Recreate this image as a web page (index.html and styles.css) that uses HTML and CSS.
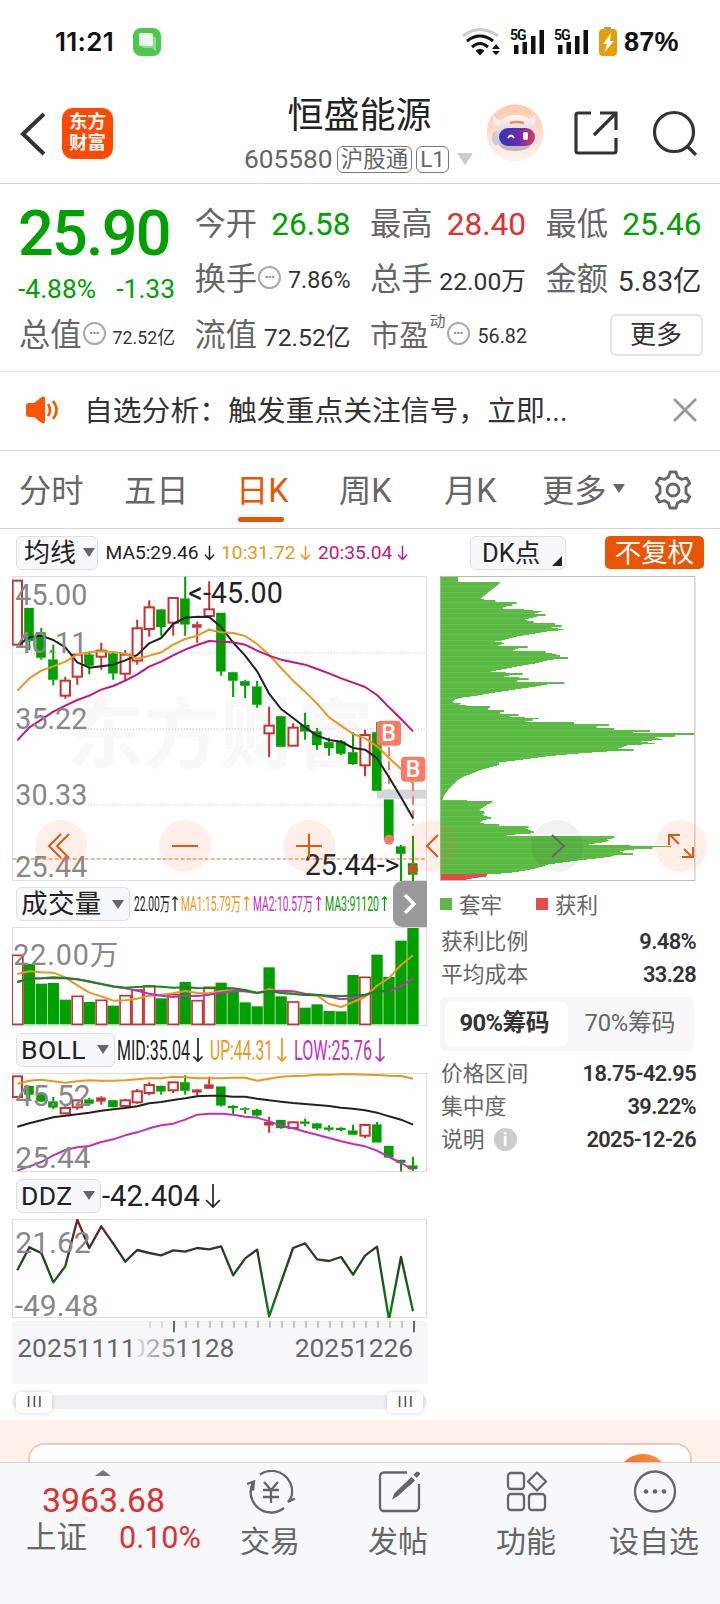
FILE: index.html
```html
<!DOCTYPE html>
<html lang="zh-CN">
<head>
    <meta charset="UTF-8">
    <meta name="viewport" content="width=device-width, initial-scale=1.0">
    <title>恒盛能源 605580</title>
    <link rel="stylesheet" href="styles.css">
</head>
<body>

<div class="status-bar">
    <span class="clock">11:21</span>
    <svg class="msg-icon" width="28" height="28" viewBox="0 0 28 28">
        <rect width="28" height="28" rx="8" fill="#4cc94a"/>
        <path d="M9 9h12a2 2 0 0 1 2 2v12l-4-3h-8a2 2 0 0 1-2-2z" fill="#8fe08c"/>
        <rect x="6" y="5" width="14" height="13" rx="2" fill="#eafbe9"/>
    </svg>
    <svg class="signals" width="160" height="32" viewBox="0 0 160 32">
        <g fill="none" stroke-width="3">
            <path d="M1 9Q18-4 36 9" stroke="#ccc"/>
            <path d="M5 14Q18 4 31 14" stroke="#111"/>
            <path d="M10 20Q18 13 26 20" stroke="#111"/>
        </g>
        <path d="M13.500 23.500Q18 20 22.500 23.500L18 28.500zM34 17l4 5h-8zM34 28l4-4h-8z" fill="#111"/>
        <g fill="#111">
            <path d="M52 18h4.500v9H52zM60.500 15H65v12h-4.500zM69 9h4.500v18H69zM77.500 3H82v24h-4.500z"/>
            <path d="M96 18h4.500v9H96zM104.500 15h4.500v12h-4.500zM113 9h4.500v18H113zM121.500 3h4.500v24h-4.500z"/>
            <text class="net" x="48" y="13">5G</text>
            <text class="net" x="92" y="13">5G</text>
        </g>
        <rect x="142" y="0" width="7" height="4" rx="1" fill="#999"/>
        <rect x="137" y="2" width="18" height="27" rx="4" fill="#e3a008"/>
        <path d="M149 6l-8 11h4l-3 9 10-12h-4z" fill="#fff"/>
    </svg>
    <span class="battery">87%</span>
</div>

<header class="header">
    <svg class="back" width="26" height="44" viewBox="0 0 26 44"><path d="M24 2L3 22l21 20" fill="none" stroke="#333" stroke-width="4"/></svg>
    <div class="logo">东方<br>财富</div>
    <div class="stock">
        <h1>恒盛能源</h1>
        <div class="code"><span>605580</span><i class="tag">沪股通</i><i class="tag">L1</i><b class="caret"></b></div>
    </div>
    <svg class="robot" width="58" height="58" viewBox="0 0 58 58">
        <defs>
            <linearGradient id="halo" x1="0" y1="0" x2="0" y2="1"><stop offset="0" stop-color="#ffc9ae"/><stop offset="1" stop-color="#fff3ee"/></linearGradient>
            <linearGradient id="visor"><stop offset="0" stop-color="#3232b8"/><stop offset=".55" stop-color="#6a2ca8"/><stop offset="1" stop-color="#d8395c"/></linearGradient>
            <linearGradient id="shell" x1="0" y1="0" x2="0" y2="1"><stop offset="0" stop-color="#fbf8f7"/><stop offset="1" stop-color="#b9b4bd"/></linearGradient>
        </defs>
        <circle cx="29" cy="29" r="28.500" fill="url(#halo)"/>
        <path d="M12 22q-7-3-4-10 3 4 9 5zM44 22q9-3 4-11-2 4-9 5z" fill="#f4efee"/>
        <ellipse cx="10" cy="34" rx="4" ry="7" fill="#cfcad2"/><ellipse cx="49" cy="34" rx="4" ry="7" fill="#e2dde2"/>
        <path d="M11 32Q11 11 30 11t18 21q0 15-19 15T11 32z" fill="url(#shell)"/>
        <rect x="13" y="24" width="36" height="18" rx="9" fill="url(#visor)"/>
        <path d="M22 34q3-5 6 0" fill="none" stroke="#fff" stroke-width="1.800"/><rect x="37" y="28" width="5" height="8" rx="2" fill="#fff"/>
        <path d="M24 19q7-2 14 0" stroke="#e8905a" stroke-width="2.500" fill="none"/>
    </svg>
    <svg class="share" width="46" height="46" viewBox="0 0 46 46"><g fill="none" stroke="#333" stroke-width="3.200"><path d="M18 3H5a2 2 0 0 0-2 2v36a2 2 0 0 0 2 2h36a2 2 0 0 0 2-2V28M27 3h16v17M43 3L21 25"/></g></svg>
    <svg class="search" width="46" height="46" viewBox="0 0 46 46"><g fill="none" stroke="#333" stroke-width="3.200"><circle cx="22" cy="22" r="19.500"/><path d="M35 36l9 9"/></g></svg>
</header>

<section class="quote">
    <div class="price">
        <strong>25.90</strong>
        <div><span>-4.88%</span><span>-1.33</span></div>
    </div>
    <div class="cell"><label>今开</label><em class="down">26.58</em></div>
    <div class="cell"><label>最高</label><em class="up">28.40</em></div>
    <div class="cell"><label>最低</label><em class="down">25.46</em></div>
    <div class="cell"><label>换手</label><i class="dots">•••</i><em class="s23">7.86%</em></div>
    <div class="cell"><label>总手</label><em class="s24">22.00万</em></div>
    <div class="cell"><label>金额</label><em class="s28">5.83亿</em></div>
    <div class="cell"><label>总值</label><i class="dots">•••</i><em class="s18">72.52亿</em></div>
    <div class="cell"><label>流值</label><em class="s24">72.52亿</em></div>
    <div class="cell"><label class="pe">市盈</label><sup>动</sup><i class="dots">•••</i><em class="s20">56.82</em></div>
    <div class="cell"><button class="more">更多</button></div>
</section>

<div class="notice">
    <svg width="34" height="28" viewBox="0 0 34 28"><path d="M3 7h5l7-5.500Q19-1 19 3v22q0 4-4 1.500L8 21H3q-3 0-3-3v-8q0-3 3-3z" fill="#ff5500"/><path d="M22 8q4 6 0 12M27 5q7 9 0 18" fill="none" stroke="#ff5500" stroke-width="2.600"/></svg>
    <p>自选分析：触发重点关注信号，立即...</p>
    <svg width="24" height="24" viewBox="0 0 24 24"><path d="M1 1l22 22M23 1L1 23" stroke="#999" stroke-width="2.800"/></svg>
</div>

<nav class="tabs">
    <a>分时</a><a>五日</a><a class="active">日K</a><a>周K</a><a>月K</a><a>更多<b></b></a>
    <svg width="40" height="40" viewBox="0 0 40 40"><g fill="none" stroke="#666" stroke-width="2.800" stroke-linejoin="round"><path d="M17 2h6l1.500 5 4 2.300 5.200-1.300 3 5.200-3.700 3.800v6l3.700 3.800-3 5.200-5.200-1.300-4 2.300L23 38h-6l-1.500-5-4-2.300L6.300 32l-3-5.200L7 23v-6l-3.700-3.800 3-5.200 5.200 1.300 4-2.300z"/><circle cx="20" cy="20" r="6"/></g></svg>
</nav>

<main class="charts">
    <div class="left">
        <div class="legend-row ma-row">
            <button class="pick">均线<b></b></button>
            <span class="ma" style="color:#222">MA5:29.46<svg class="arr" viewBox="0 0 12 16"><path d="M6 0v15M1 10l5 5 5-5"/></svg></span>
            <span class="ma" style="color:#e8981c">10:31.72<svg class="arr" viewBox="0 0 12 16"><path d="M6 0v15M1 10l5 5 5-5"/></svg></span>
            <span class="ma" style="color:#c01880">20:35.04<svg class="arr" viewBox="0 0 12 16"><path d="M6 0v15M1 10l5 5 5-5"/></svg></span>
        </div>
        <svg class="chart" id="kline" width="415" height="305" viewBox="36 31 1245 915"></svg>
        <div class="legend-row vol-row">
            <button class="pick">成交量<b></b></button>
            <svg class="vals" id="vol-vals" width="263" height="40"></svg>
            <button class="next"><svg width="16" height="22" viewBox="0 0 16 22"><path d="M3 2l9 9-9 9" fill="none" stroke="#fff" stroke-width="3.500"/></svg></button>
        </div>
        <svg class="chart" id="volume" width="415" height="99" viewBox="36 37 1245 297"></svg>
        <div class="legend-row">
            <button class="pick boll">BOLL<b></b></button>
            <svg class="vals" id="boll-vals" width="280" height="40"></svg>
        </div>
        <svg class="chart" id="boll" width="415" height="99" viewBox="36 475 1245 297"></svg>
        <div class="legend-row">
            <button class="pick ddz">DDZ<b></b></button>
            <svg class="vals" id="ddz-vals" width="200" height="40"></svg>
        </div>
        <svg class="chart" id="ddz" width="415" height="99" viewBox="36 148 1245 297"></svg>
        <svg class="axis" id="axis" width="415" height="63" viewBox="36 453 1245 189"></svg>
        <div class="slider"><i>III</i><i>III</i></div>
    </div>

    <div class="right">
        <div class="legend-row dk-row">
            <button class="pick dk">DK点<b></b></button>
            <button class="adjust">不复权</button>
        </div>
        <svg class="chart" id="chips" width="256" height="305" viewBox="30 18 768 915"></svg>
        <div class="chip-legend"><i class="g"></i>套牢<i class="r"></i>获利</div>
        <dl><dt>获利比例</dt><dd>9.48%</dd></dl>
        <dl><dt>平均成本</dt><dd>33.28</dd></dl>
        <div class="segment"><span class="on">90%筹码</span><span>70%筹码</span></div>
        <dl><dt>价格区间</dt><dd>18.75-42.95</dd></dl>
        <dl><dt>集中度</dt><dd>39.22%</dd></dl>
        <dl><dt>说明<i class="info">i</i></dt><dd>2025-12-26</dd></dl>
    </div>

    <!-- floating zoom / pan controls -->
    <div class="controls">
        <svg viewBox="0 0 52 52"><path d="M34 14L22 26l12 12M26 14L14 26l12 12"/></svg>
        <svg viewBox="0 0 52 52"><path d="M13 26h26"/></svg>
        <svg viewBox="0 0 52 52"><path d="M13 26h26M26 14v24"/></svg>
        <svg viewBox="0 0 52 52"><path d="M31 15L20 26l11 11"/></svg>
        <svg class="grey" viewBox="0 0 52 52"><path d="M21 15l12 11-12 11"/></svg>
        <svg viewBox="0 0 52 52"><path d="M14 25V15h11M15 15l9 9M38 27v10H27M37 37l-8-8"/></svg>
    </div>
</main>

<section class="promo"><div class="promo-card"><i></i></div></section>

<footer class="bottom-bar">
    <div class="index">
        <b></b>
        <div class="points">3963.68</div>
        <div class="change"><span>上证</span><em>0.10%</em></div>
    </div>
    <div class="item">
        <svg width="50" height="46" viewBox="0 0 50 46"><g fill="none" stroke="#666" stroke-width="2.300"><path d="M14 4.500A20.500 20.500 0 0 1 45 28l-3 4 7-3.500M38 38A20.500 20.500 0 0 1 7 12.500M1 14l7-2.500-1 9M18 12l7 8 7-8M17 20h16M17 27h16M25 20v13"/></g></svg>
        <span>交易</span>
    </div>
    <div class="item">
        <svg width="50" height="46" viewBox="0 0 50 46"><path d="M33 2.500H10a4 4 0 0 0-4 4V37a4 4 0 0 0 4 4h31a4 4 0 0 0 4-4V14" fill="none" stroke="#666" stroke-width="2.300"/><path d="M37.500 7l3.500 3.500L24 26l-6 3.500L20.500 23zM39.500 5l2.500-3q4-1 4 2l-3 4z" fill="#666"/></svg>
        <span>发帖</span>
    </div>
    <div class="item">
        <svg width="50" height="46" viewBox="0 0 50 46"><g fill="none" stroke="#666" stroke-width="2.300"><rect x="6" y="3" width="16" height="16" rx="3"/><rect x="6" y="24" width="16" height="16" rx="3"/><rect x="27" y="24" width="16" height="16" rx="3"/><path d="M35 2.500l9 9-9 9-9-9z" stroke-linejoin="round"/></g></svg>
        <span>功能</span>
    </div>
    <div class="item">
        <svg width="50" height="46" viewBox="0 0 50 46"><circle cx="25" cy="21.500" r="20" fill="none" stroke="#666" stroke-width="2.300"/><g fill="#666"><circle cx="16" cy="21.500" r="2.300"/><circle cx="25" cy="21.500" r="2.300"/><circle cx="34" cy="21.500" r="2.300"/></g></svg>
        <span>设自选</span>
    </div>
</footer>

<script>
    const GREEN = '#00a000', RED = '#c83232', ORANGE = '#e8981c', PURPLE = '#c030c0', BLACK = '#222';
    const x = i => 52 + i * 35.97;

    // color, high, open/close top, bottom, low
    const klineData = [
        ['r',45,45,237,237],['g',127,127,225,254],['g',187,200,276,282],['g',237,282,342,359],['r',333,345,390,399],
        ['r',265,267,333,357],['g',258,267,300,326],['r',231,255,273,312],['g',262,264,323,342],['r',253,267,324,347],
        ['r',162,188,285,297],['r',104,125,190,213],['g',130,132,184,210],['r',97,97,171,210],['g',33,99,176,210],
        ['r',168,176,186,231],['r',47,131,151,155],['g',142,142,317,330],['g',318,320,345,394],['g',342,347,360,398],
        ['g',345,363,417,426],['r',423,480,503,575],['g',450,452,543,545],['r',473,486,540,542],['g',441,478,497,522],
        ['g',487,497,538,553],['g',516,530,547,570],['g',523,528,564,568],['g',500,560,595,597],['r',492,508,599,632],
        ['g',470,500,675,675],['g',702,702,822,822],['g',838,843,864,947],['g',810,893,927,947]
    ];
    const bollData = [
        ['r',485,485,547,547],['g',513,514,540,552],['g',533,537,560,562],['g',547,561,578,584],['r',575,580,596,598],
        ['r',555,557,578,585],['g',550,555,567,572],['r',545,549,560,570],['g',556,557,577,578],['r',552,557,574,580],
        ['r',523,530,563,567],['r',503,511,535,542],['g',513,514,530,540],['r',502,503,527,535],['g',482,503,528,540],
        ['r',524,525,533,543],['r',486,510,522,522],['g',516,516,572,576],['g',572,574,580,597],['g',578,581,585,597],
        ['g',582,586,602,606],['r',606,622,632,654],['g',616,616,640,642],['r',620,623,640,641],['g',612,621,627,635],
        ['g',624,627,641,645],['g',632,639,645,650],['g',638,640,646,650],['g',630,648,660,661],['r',627,631,663,671],
        ['g',622,630,683,683],['g',694,694,728,728],['g',735,736,744,770],['g',726,753,763,768]
    ];
    const volumeData = 'r122 g148 g207 g205 g255 r245 g262 r257 g273 r243 r226 r214 g251 r240 g202 r258 r218 g204 g222 g263 g275 g158 g245 r262 g279 g269 g289 g290 g181 r188 g120 g187 g78 g40'.split(' ');

    function line(ys, color, width = 6) {
        return `<polyline points="${ys.map((y, i) => x(i) + ',' + y).join(' ')}" fill="none" stroke="${color}" stroke-width="${width}" stroke-linejoin="round"/>`;
    }

    function candles(data) {
        return data.map(([c, hi, top, bottom, lo], i) => {
            const color = c === 'r' ? RED : GREEN;
            const wick = `<path d="M${x(i)} ${hi}V${top}M${x(i)} ${bottom}V${lo}" stroke="${color}" stroke-width="6"/>`;
            const hollow = c === 'r' && bottom - top > 12;
            const body = hollow
                ? `<rect x="${x(i) - 14}" y="${top}" width="28" height="${bottom - top}" fill="#fff" stroke="${color}" stroke-width="6"/>`
                : `<rect x="${x(i) - 15}" y="${top}" width="28" height="${bottom - top}" fill="${color}" stroke="${color}" stroke-width="1"/>`;
            return wick + body;
        }).join('');
    }

    function label(text, lx, ly, cls = 'scale') {
        return `<text class="${cls}" x="${lx}" y="${ly}">${text}</text>`;
    }

    function frame(top, h, w = 1242) {
        return `<rect x="37.500" y="${top + 1.5}" width="${w}" height="${h - 3}" fill="none" stroke="#ddd" stroke-width="3"/>`;
    }

    function badge(bx, by) {
        return `<rect x="${bx}" y="${by}" width="73" height="75" rx="12" fill="#fa7a68"/><text class="badge" x="${bx + 36}" y="${by + 62}">B</text>`;
    }

    const ma5 = [240,215,210,223,245,290,306,302,297,284,268,233,217,175,156,153,154,184,231,270,317,384,430,457,485,510,523,528,547,552,578,635,695,758];
    const ma10 = [375,338,315,302,288,267,260,257,259,264,279,270,260,237,220,210,192,200,202,211,235,268,307,345,378,414,455,480,505,518,542,577,610,655];
    const ma20 = [524,485,462,438,420,403,390,372,361,345,326,303,288,269,252,238,226,228,230,237,255,270,282,290,297,310,323,338,351,364,388,425,460,497];

    document.getElementById('kline').innerHTML =
        '<text class="watermark" x="200" y="588">东方财富</text>' +
        [262, 490, 718].map(y => `<path d="M38 ${y}H1279" stroke="#ccc" stroke-width="3" stroke-dasharray="4 5"/>`).join('') +
        frame(31, 915) +
        '<rect x="1131" y="672" width="147" height="27" fill="#d3d6db"/>' +
        candles(klineData) +
        '<circle cx="1167" cy="822" r="15" fill="#f47a68"/><circle cx="1239" cy="911" r="15" fill="#b85a18"/>' +
        '<path d="M1167 545V672M1239 650V780" stroke="#f47a68" stroke-width="6" stroke-dasharray="27 15"/>' +
        line(ma5, BLACK) + line(ma10, ORANGE) + line(ma20, '#c01880') +
        badge(1130, 465) + badge(1203, 573) +
        '<path d="M38 880H1279" stroke="#c8743c" stroke-width="3" stroke-dasharray="12 6"/>' +
        label('45.00', 46, 119) + label('40.11', 46, 261) + label('35.22', 46, 491) + label('30.33', 46, 719) + label('25.44', 46, 935) +
        label('&lt;-45.00', 565, 113, 'scale dark') + label('25.44-&gt;', 914, 928, 'scale dark');

    document.getElementById('volume').innerHTML = frame(37, 297) +
        volumeData.map((v, i) => {
            const top = +v.slice(1);
            return v[0] === 'r'
                ? `<rect x="${x(i) - 15.5}" y="${top}" width="32" height="${329 - top}" fill="#fff" stroke="${RED}" stroke-width="5"/>`
                : `<rect x="${x(i) - 17}" y="${top}" width="34" height="${329 - top}" fill="${GREEN}"/>`;
        }).join('') +
        line([178,170,173,174,188,212,234,245,258,257,252,243,240,236,229,235,236,229,226,230,236,223,231,236,240,243,268,277,262,247,213,190,151,122], ORANGE) +
        line([202,192,191,190,191,194,200,208,216,221,228,237,243,247,243,244,240,234,229,230,235,229,228,230,237,240,246,254,250,242,229,230,214,192], PURPLE) +
        line([202,192,191,188,190,194,201,208,215,219,217,215,216,219,218,220,221,220,221,226,234,230,235,238,241,241,243,245,242,240,230,229], '#138a13') +
        '<text class="scale" x="40" y="150" textLength="315">22.00万</text>';

    document.getElementById('boll').innerHTML = frame(475, 297) + candles(bollData) +
        line([507,498,495,500,504,500,497,498,498,497,494,491,491,486,488,491,491,491,489,489,498,492,486,484,483,480,480,479,479,480,481,483,484,492], ORANGE) +
        line([636,626,617,608,603,599,594,588,584,580,575,566,562,556,551,545,543,543,546,546,552,557,561,565,568,571,574,579,582,587,594,605,615,630], BLACK) +
        line([768,755,742,722,706,698,694,682,674,662,653,641,632,627,615,600,597,597,600,606,609,620,633,641,651,660,670,680,688,695,708,727,745,765], PURPLE) +
        label('45.52', 46, 575, 'scale wide') + label('25.44', 46, 759, 'scale wide');

    document.getElementById('ddz').innerHTML = frame(148, 297) +
        '<defs><linearGradient id="heat" gradientUnits="userSpaceOnUse" x1="0" y1="150" x2="0" y2="445"><stop offset="0" stop-color="#7a2424"/><stop offset=".3" stop-color="#333"/><stop offset=".45" stop-color="#1c4a1c"/><stop offset="1" stop-color="#0a800a"/></linearGradient></defs>' +
        line([302,233,250,338,290,150,235,170,222,276,241,250,257,242,246,235,239,230,317,266,240,440,337,235,221,269,274,262,315,258,231,450,262,425], 'url(#heat)', 7) +
        label('21.62', 46, 249, 'scale wide') + label('-49.48', 44, 439, 'scale wide');

    // time axis, ticks fade in from the left
    let ticks = '';
    for (let i = 0; i < 23; i++) {
        const major = i === 2 || i === 22;
        ticks += `<path d="M${450 + i * 36} 453v${major ? 34 : 20}" stroke="${major ? '#666' : '#aaa'}" stroke-width="${major ? 6 : 4}" opacity="${i < 2 ? .5 : 1}"/>`;
    }
    document.getElementById('axis').innerHTML =
        '<defs><linearGradient id="fade" gradientUnits="userSpaceOnUse" x1="410" y1="0" x2="545" y2="0"><stop offset="0" stop-color="#666" stop-opacity=".15"/><stop offset="1" stop-color="#666"/></linearGradient><clipPath id="cut"><path d="M412 453h500v189H412z"/></clipPath></defs>' +
        ticks + label('20251111', 52, 562, 'date') +
        '<g clip-path="url(#cut)"><text class="date" x="348" y="562" style="fill:url(#fade)">20251128</text></g>' +
        label('20251226', 884, 562, 'date');

    // chip distribution outline: y, x pairs
    const chips = [18,84,35,84,37,212,48,200,60,184,75,165,88,150,90,196,95,196,96,260,101,260,102,247,107,247,108,234,112,220,117,220,118,282,121,282,122,335,127,335,128,314,132,314,133,347,138,347,139,323,145,300,150,280,154,311,158,311,159,375,164,375,165,395,170,395,171,365,175,365,176,402,181,402,182,365,188,330,194,295,200,258,206,236,212,213,215,192,218,221,223,221,224,204,227,204,228,293,233,293,234,270,240,250,243,250,244,347,249,347,250,365,256,390,261,390,262,414,266,414,267,380,272,348,280,318,285,287,290,258,296,228,301,200,306,178,309,278,314,278,315,246,320,220,324,296,330,296,331,262,335,262,336,403,341,403,342,360,350,314,355,278,361,240,366,204,372,168,378,134,382,100,388,76,397,66,400,92,406,86,408,180,414,180,415,174,420,174,421,222,426,222,427,210,431,210,432,266,437,266,438,240,442,240,443,327,447,327,448,308,452,308,453,288,456,288,457,432,462,432,463,537,468,537,469,500,473,500,474,552,479,552,480,660,485,660,486,610,489,610,490,793,495,793,496,735,500,735,501,675,505,675,506,697,511,697,512,635,517,635,518,673,523,673,524,597,530,582,536,565,538,611,543,611,544,537,549,465,555,392,560,342,566,298,572,252,577,207,585,207,590,188,596,166,601,147,607,135,613,120,620,100,630,84,640,73,650,63,660,54,670,47,680,41,690,37,693,186,698,186,703,173,710,163,720,146,725,164,730,164,735,156,742,183,746,183,750,160,760,147,762,207,767,207,768,296,773,296,775,288,780,298,785,312,790,312,792,270,797,225,799,553,805,553,807,530,812,537,817,520,823,477,826,477,827,724,831,724,832,668,837,668,838,617,843,570,847,570,849,609,854,609,855,556,860,541,866,495,871,447,877,402,883,355,890,336,897,310,903,278,908,243,911,208,912,173,920,168,924,133,930,102,940,102];
    let bars = '', k = 0;
    for (let y = 18; y < 930; y += 3) {
        const mid = y + 1.5;
        while (chips[k + 2] < mid) k += 2;
        const t = (mid - chips[k]) / (chips[k + 2] - chips[k]);
        const w = chips[k + 1] + t * (chips[k + 3] - chips[k + 1]) - 30;
        const shade = y >= 910 ? '#e64b4b' : (y % 16 < 3 ? '#66c051' : '#5aba44');
        bars += `<rect x="30" y="${y}" width="${w.toFixed(0)}" height="3.200" fill="${shade}"/>`;
    }
    document.getElementById('chips').innerHTML =
        bars + '<rect x="31.500" y="19.500" width="763" height="912" fill="none" stroke="#bbb" stroke-width="3"/><path d="M31 20V930" stroke="#7fc46f" stroke-width="3"/>';

    // condensed indicator values: text, x, width, color, arrow x
    function values(id, items, size, base, up, h, a) {
        document.getElementById(id).innerHTML = items.map(([t, tx, w, color, ax]) => {
            const arrow = up
                ? `M${ax} ${base}v${-h}m${-a} ${a}l${a} ${-a}l${a} ${a}`
                : `M${ax} ${base - h + 1}v${h}m${-a} ${-a}l${a} ${a}l${a} ${-a}`;
            return `<text x="${tx}" y="${base}" textLength="${w}" lengthAdjust="spacingAndGlyphs" fill="${color}" font-size="${size}">${t}</text><path d="${arrow}" fill="none" stroke="${color}" stroke-width="${up ? 1.3 : 1.7}"/>`;
        }).join('');
    }
    values('vol-vals', [['22.00万',4,36,BLACK,45],['MA1:15.79万',51,60,ORANGE,116.5],['MA2:10.57万',123,60,PURPLE,188.5],['MA3:91120',195,54,GREEN,254.5]], 19.5, 27, true, 14, 2.6);
    values('boll-vals', [['MID:35.04',2,73,BLACK,83],['UP:44.31',95,63,ORANGE,167],['LOW:25.76',179,78,PURPLE,265]], 28.5, 30, false, 23, 4.5);
    values('ddz-vals', [['-42.404',1,98,BLACK,112]], 29.2, 30, false, 23, 7);
</script>

</body>
</html>
```

FILE: styles.css
```css
* {
    box-sizing: border-box;
}
body {
    font-family: Roboto, "Noto Sans CJK SC", sans-serif;
    margin: 0;
    width: 720px;
    height: 1604px;
    overflow: hidden;
    background-color: #fff;
    color: #333;
}
button {
    font-family: inherit;
    margin: 0;
    padding: 0;
    border: none;
    white-space: nowrap;
}
i, em {
    font-style: normal;
}
h1, p, dl, dt, dd {
    margin: 0;
    font-weight: normal;
}
svg {
    display: block;
    flex: none;
}

/* Status bar */
.status-bar {
    height: 84px;
    display: flex;
    align-items: center;
    padding: 0 36px 2px 55px;
    color: #111;
}
.clock {
    font-family: Inter, sans-serif;
    font-size: 26px;
    font-weight: 600;
    width: 78px;
    letter-spacing: 0.3px;
}
.msg-icon {
    margin-top: 2px;
}
.signals {
    margin: 4px 0 0 auto;
}
.net {
    font-size: 14px;
    font-weight: bold;
    letter-spacing: -1px;
}
.battery {
    font-family: "Liberation Sans", sans-serif;
    font-size: 27px;
    font-weight: bold;
    letter-spacing: 0.2px;
    width: 60px;
    margin: 2px 0 0 2px;
}

/* Header */
.header {
    height: 100px;
    display: flex;
    border-bottom: 1px solid #d5d5d5;
    padding: 0 22px 0 20px;
    position: relative;
}
.back {
    margin-top: 28px;
}
.logo {
    width: 51px;
    height: 51px;
    margin: 24px 0 0 16px;
    border-radius: 11px;
    background-color: #ff4800;
    color: white;
    font-size: 18.5px;
    font-weight: bold;
    line-height: 21px;
    padding-top: 4px;
    text-align: center;
}
.stock {
    width: 260px;
    margin-left: 117px;
    text-align: center;
}
.stock h1 {
    font-size: 36px;
    line-height: 44px;
    margin-top: 10px;
    color: #222;
}
.code {
    display: flex;
    justify-content: center;
    align-items: center;
    height: 32px;
    margin-top: 5px;
    padding-right: 2px;
    font-size: 26.3px;
    color: #666;
}
.tag {
    height: 27px;
    border: 1px solid #777;
    border-radius: 6px;
    font-size: 22.5px;
    line-height: 24px;
    padding: 0 3px;
    margin-left: 4px;
}
.caret {
    border: 8px solid transparent;
    border-top: 12px solid #ccc;
    border-bottom: 0;
    margin-left: 8px;
}
.robot {
    margin: 20px 0 0 -3px;
}
.share {
    margin: 26px 0 0 29px;
}
.search {
    margin: 26px 0 0 33px;
}

/* Quote */
.quote {
    height: 188px;
    border-bottom: 1px solid #e8e8e8;
    padding: 13px 19px 0;
    display: grid;
    grid-template-columns: repeat(4, 156px);
    grid-template-rows: 55px 56px 56px;
    column-gap: 19.5px;
}
.price {
    grid-row: span 2;
    color: #00a000;
}
.price strong {
    display: block;
    font-size: 63px;
    font-weight: 500;
    line-height: 74px;
    letter-spacing: -1.8px;
    margin-left: -1px;
}
.price div {
    display: flex;
    justify-content: space-between;
    font-size: 26.4px;
    line-height: 36px;
    margin-left: -1px;
}
.cell {
    display: flex;
    align-items: center;
    position: relative;
}
.cell label {
    font-size: 31.3px;
    color: #666;
    line-height: 44px;
}
.cell .pe {
    font-size: 29.3px;
}
.cell sup {
    font-size: 16px;
    color: #666;
    margin: -28px 0 0 1px;
    line-height: 20px;
}
.cell em {
    font-size: 31.6px;
    margin-left: auto;
    white-space: nowrap;
}
.cell .s18 { font-size: 17.8px; }
.cell .s20 { font-size: 19.7px; margin-right: -1px; }
.cell .s23 { font-size: 23.3px; }
.cell .s24 { font-size: 24.7px; margin-top: -2px; }
.cell .s28 { font-size: 28.4px; margin-top: -3px; }
.cell .down { color: #00a000; }
.cell .up { color: #e03030; }
.dots {
    width: 23px;
    height: 23px;
    border: 2px solid #aaa;
    border-radius: 50%;
    font-size: 11px;
    letter-spacing: -0.5px;
    line-height: 19px;
    text-align: center;
    color: #888;
    margin: -6px 0 0 1px;
    display: flex;
    justify-content: center;
}
.more {
    width: 93px;
    height: 42px;
    margin-left: auto;
    margin-top: -3px;
    border: 2px solid #e5e5e5;
    border-radius: 6px;
    background-color: #fff;
    color: #333;
    font-size: 26px;
    line-height: 36px;
    position: relative;
    left: 1px;
}

/* Notice */
.notice {
    height: 79px;
    border-bottom: 1px solid #d5d5d5;
    display: flex;
    align-items: center;
    padding: 0 23px 2px 26px;
}
.notice p {
    flex: 1;
    margin: -3px 0 0 24px;
    font-size: 28.8px;
    color: #333;
}

/* Tabs */
.tabs {
    height: 78px;
    border-bottom: 1px solid #d5d5d5;
    display: grid;
    grid-template-columns: 105px 112px 103px 105px 98px 111px 40px;
    align-items: center;
    padding-left: 19px;
    font-size: 32.3px;
    color: #666;
}
.tabs a {
    display: flex;
    align-items: center;
    height: 76px;
    padding-bottom: 3px;
    position: relative;
}
.tabs a b {
    border: 6px solid transparent;
    border-top: 9px solid #666;
    border-bottom: 0;
    margin-left: 6px;
}
.tabs .active {
    color: #ea5504;
}
.tabs .active::after {
    content: "";
    position: absolute;
    left: 2px;
    bottom: 6px;
    width: 46px;
    height: 5px;
    border-radius: 3px;
    background-color: #ea5504;
}

/* Charts */
.charts {
    height: 891px;
    display: flex;
    padding-left: 12px;
    position: relative;
}
.left {
    width: 415px;
}
.right {
    width: 264px;
    margin-left: 13px;
}
.legend-row {
    height: 47px;
    display: flex;
    align-items: center;
    padding-left: 4px;
}
.pick {
    height: 34px;
    border: 1px solid #dcdfe4;
    border-radius: 6px;
    background-color: #f7f8fa;
    color: #222;
    font-size: 26.5px;
    line-height: 30px;
    display: flex;
    align-items: center;
    padding: 0 5px 0 4px;
    letter-spacing: 0.4px;
}
.pick b {
    border: 6px solid transparent;
    border-top: 9px solid #666;
    border-bottom: 0;
    margin-left: auto;
}
.ma-row .pick {
    width: 82px;
    padding: 0 2px 0 7px;
    font-size: 26px;
    letter-spacing: 0;
}
.boll {
    width: 99px;
}
.ddz {
    width: 85px;
}
.ma {
    display: flex;
    align-items: center;
    font-size: 19.2px;
    margin-left: 7.5px;
    white-space: nowrap;
}
.arr {
    width: 11px;
    height: 16px;
    margin-left: 5px;
    margin-right: -1px;
    fill: none;
    stroke: currentColor;
    stroke-width: 1.6;
}
.vol-row {
    height: 46px;
}
.vol-row .pick {
    width: 114px;
}
.next {
    width: 34px;
    height: 46px;
    flex: none;
    border-radius: 9px 0 0 9px;
    background-color: #999;
    display: flex;
    align-items: center;
    justify-content: center;
}
.scale {
    font-size: 86px;
    fill: #888;
}
.wide {
    font-size: 90px;
}
.dark {
    fill: #222;
}
.date {
    font-size: 79px;
    fill: #666;
}
.badge {
    font-size: 70px;
    font-weight: 500;
    fill: #fff;
    text-anchor: middle;
}
.watermark {
    font-size: 230px;
    font-weight: bold;
    fill: #f8f8f8;
}
.axis {
    background-color: #f7f7fa;
    margin-top: 3px;
}
.slider {
    height: 14px;
    margin-top: 11px;
    border-radius: 7px;
    background-color: #f0f0f2;
    display: flex;
    justify-content: space-between;
    align-items: center;
    padding: 0 4px;
}
.slider i {
    width: 36px;
    height: 21px;
    border-radius: 5px;
    background-color: #fff;
    box-shadow: 0 0 4px rgba(0,0,0,0.18);
    font-size: 15px;
    line-height: 21px;
    letter-spacing: 1.6px;
    padding-left: 2px;
    text-align: center;
    color: #444;
}

/* Chip distribution */
.dk-row {
    padding-left: 30px;
    justify-content: space-between;
}
.dk {
    width: 96px;
    padding: 0 3px 0 11px;
    font-size: 25.5px;
    letter-spacing: 0;
}
.pick.dk b {
    border: 5px solid transparent;
    border-right-color: #222;
    border-bottom-color: #222;
    margin-top: 16px;
}
.adjust {
    width: 99px;
    height: 33px;
    border-radius: 5px;
    background-color: #ea5504;
    color: white;
    font-size: 26.5px;
    line-height: 30px;
}
.chip-legend {
    display: flex;
    align-items: center;
    height: 44px;
    font-size: 21.5px;
    color: #666;
}
.chip-legend i {
    width: 12px;
    height: 12px;
    margin: 1px 7px 0 0;
}
.chip-legend .g {
    background-color: #5aba44;
}
.chip-legend .r {
    background-color: #e64b4b;
    margin-left: 34px;
}
.right dl {
    width: 256px;
    height: 33px;
    display: flex;
    align-items: center;
    justify-content: space-between;
    font-size: 21.8px;
    line-height: 33px;
    color: #666;
    padding-left: 1px;
}
.right dd {
    font-weight: 600;
    color: #333;
    letter-spacing: -0.6px;
}
.segment {
    width: 254px;
    height: 54px;
    margin: 6px 0;
    border-radius: 6px;
    background-color: #f7f7fa;
    display: flex;
    align-items: center;
    padding: 5px;
    font-size: 23.8px;
    color: #666;
}
.segment span {
    flex: 1;
    height: 44px;
    line-height: 42px;
    text-align: center;
    letter-spacing: -0.3px;
    padding-left: 3px;
}
.segment .on {
    background-color: #fff;
    border-radius: 6px;
    font-weight: bold;
    color: #333;
    padding: 0 4px 0 0;
    letter-spacing: -0.6px;
}
.info {
    display: inline-block;
    width: 23px;
    height: 23px;
    margin-left: 9px;
    border-radius: 50%;
    background-color: #ccc;
    color: #fff;
    font-size: 18px;
    font-weight: bold;
    line-height: 23px;
    text-align: center;
    vertical-align: 1px;
}

.controls {
    position: absolute;
    left: 35px;
    top: 291px;
    display: flex;
    gap: 72px;
}
.controls svg {
    width: 52px;
    height: 52px;
    border-radius: 50%;
    background-color: rgba(255,110,50,0.11);
    fill: none;
    stroke: #dd5a14;
    stroke-width: 2;
}
.controls .grey {
    background-color: rgba(0,0,0,0.05);
    stroke: #666;
}

/* Promo card, cut off by the bottom bar */
.promo {
    height: 42px;
    overflow: hidden;
    background-color: #fff2ec;
    padding: 23px 28px 0;
}
.promo-card {
    height: 80px;
    border: 2px solid #f3c8bb;
    border-radius: 16px;
    background-color: #fff;
    padding: 9px 0 0 586px;
}
.promo-card i {
    display: block;
    width: 54px;
    height: 54px;
    border-radius: 50%;
    background: linear-gradient(90deg, #ff6a1a, #ff9440);
}

/* Bottom bar */
.bottom-bar {
    height: 142px;
    border-top: 1px solid #cfd3da;
    background-color: #f7f8fa;
    display: flex;
    color: #666;
}
.index {
    width: 207px;
    padding: 7px 0 0 26px;
}
.index b {
    display: block;
    width: 0;
    border: 8px solid transparent;
    border-bottom: 6px solid #777;
    border-top: 0;
    margin-left: 69px;
}
.points {
    font-size: 33.8px;
    line-height: 40px;
    color: #dd3030;
    margin: 5px 0 0 16px;
}
.change {
    display: flex;
    font-size: 30.5px;
    line-height: 34px;
}
.change em {
    color: #dd3030;
    margin-left: 32px;
}
.item {
    width: 128px;
    padding-top: 7px;
    display: flex;
    flex-direction: column;
    align-items: center;
    font-size: 30px;
    line-height: 40px;
}
.item span {
    margin-top: 6px;
    margin-left: -2px;
}
```
